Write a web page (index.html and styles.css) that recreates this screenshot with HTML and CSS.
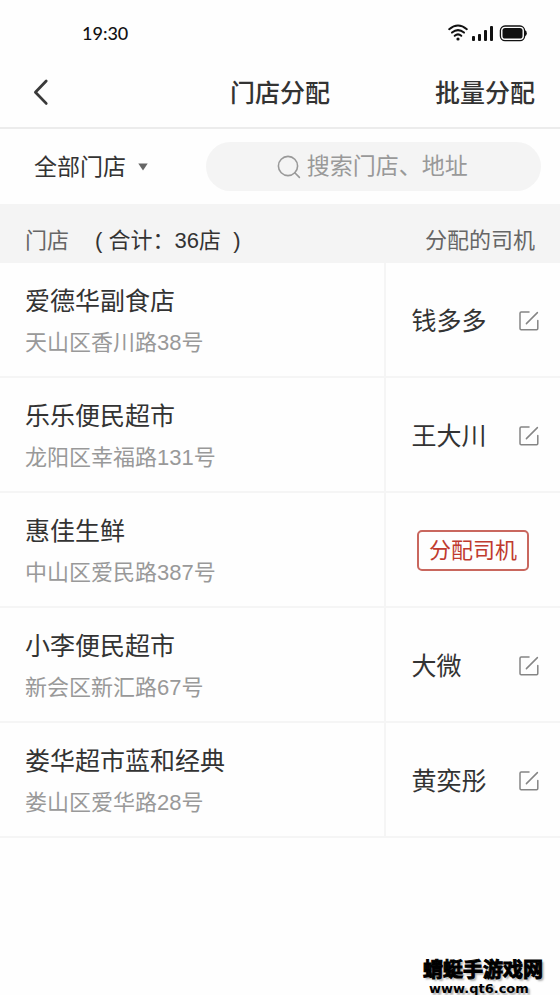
FILE: index.html
```html
<!DOCTYPE html>
<html lang="zh-CN">
<head>
<meta charset="utf-8">
<meta name="viewport" content="width=device-width, initial-scale=1">
<title>门店分配</title>
<link rel="stylesheet" href="styles.css">
</head>
<body>
<svg class="defs" width="0" height="0" aria-hidden="true">
  <symbol id="edit" viewBox="0 0 22 22">
    <path d="M11 2H3.2Q2 2 2 3.2V18.6Q2 19.8 3.2 19.8H18.6Q19.8 19.8 19.8 18.6V10.6M8.4 13.6L19.4 2.6" fill="none" stroke="#858585" stroke-width="1.5" stroke-linecap="round"/>
  </symbol>
</svg>
<div class="status">
  <span class="time">19:30</span>
  <svg width="80" height="20" viewBox="0 0 80 20" aria-hidden="true">
    <g fill="none" stroke="#111" stroke-width="2" stroke-linecap="round">
      <path d="M2.2 6.2Q11 -1.2 19.8 6.2"/>
      <path d="M5 9.6Q11 4.6 17 9.6"/>
      <path d="M7.7 12.8Q11 10 14.3 12.8"/>
    </g>
    <circle cx="11" cy="16" r="1.6" fill="#111"/>
    <g fill="#111">
      <rect x="25" y="13" width="3" height="5" rx="1"/>
      <rect x="31" y="11" width="3" height="7" rx="1"/>
      <rect x="37" y="7" width="3" height="11" rx="1"/>
      <rect x="43" y="3" width="3" height="15" rx="1"/>
      <rect x="55.5" y="5" width="20" height="10.5" rx="2.6"/>
      <path d="M78 7.2Q79.8 7.6 79.8 10.2T78 13.2Z"/>
    </g>
    <rect x="53.4" y="3" width="24.2" height="14.6" rx="4.6" fill="none" stroke="#111" stroke-width="1.3"/>
  </svg>
</div>
<header class="nav">
  <button class="back" type="button" aria-label="返回">
    <svg width="16" height="28" viewBox="0 0 16 28" aria-hidden="true"><path d="M13.2 2L2.4 13.2L13.2 24.4" fill="none" stroke="#3a3a3a" stroke-width="2.8" stroke-linecap="round" stroke-linejoin="round"/></svg>
  </button>
  <h1>门店分配</h1>
  <button class="batch" type="button">批量分配</button>
</header>
<main>
  <div class="filter">
    <button class="scope" type="button">全部门店
      <svg width="10" height="8" viewBox="0 0 10 8" aria-hidden="true"><path d="M0.3 0.5H9.7L5 7.6Z" fill="#666"/></svg>
    </button>
    <label class="search">
      <svg width="24" height="24" viewBox="0 0 24 24" aria-hidden="true"><g fill="none" stroke="#999" stroke-width="1.6" stroke-linecap="round"><circle cx="11" cy="11" r="9.6"/><path d="M17.8 17.8L22.4 22.4"/></g></svg>
      <input type="text" placeholder="搜索门店、地址" aria-label="搜索门店、地址">
    </label>
  </div>
  <table>
    <thead>
      <tr>
        <th class="store" scope="col">门店<span class="total">( 合计：36店 &nbsp;)</span></th>
        <th class="driver" scope="col">分配的司机</th>
      </tr>
    </thead>
    <tbody>
      <tr>
        <td><h2>爱德华副食店</h2><p>天山区香川路38号</p></td>
        <td><div class="who">钱多多<button type="button" aria-label="编辑"><svg width="22" height="22"><use href="#edit"/></svg></button></div></td>
      </tr>
      <tr>
        <td><h2>乐乐便民超市</h2><p>龙阳区幸福路131号</p></td>
        <td><div class="who">王大川<button type="button" aria-label="编辑"><svg width="22" height="22"><use href="#edit"/></svg></button></div></td>
      </tr>
      <tr>
        <td><h2>惠佳生鲜</h2><p>中山区爱民路387号</p></td>
        <td class="empty"><button class="assign" type="button">分配司机</button></td>
      </tr>
      <tr>
        <td><h2>小李便民超市</h2><p>新会区新汇路67号</p></td>
        <td><div class="who">大微<button type="button" aria-label="编辑"><svg width="22" height="22"><use href="#edit"/></svg></button></div></td>
      </tr>
      <tr>
        <td><h2>娄华超市蓝和经典</h2><p>娄山区爱华路28号</p></td>
        <td><div class="who">黄奕彤<button type="button" aria-label="编辑"><svg width="22" height="22"><use href="#edit"/></svg></button></div></td>
      </tr>
    </tbody>
  </table>
</main>
<footer class="mark">
  <span class="site">蜻蜓手游戏网</span>
  <span class="url">www.qt6.com</span>
</footer>
</body>
</html>
```
FILE: styles.css
```css
* { box-sizing: border-box; }

body {
  margin: 0;
  min-height: 100vh;
  display: flex;
  flex-direction: column;
  background: #fefefe;
  color: #333;
  font-family: "Liberation Sans", "Noto Sans CJK SC", sans-serif;
  font-size: 25px;
}

button {
  padding: 0;
  border: 0;
  background: none;
  color: inherit;
  font: inherit;
}

svg { display: block; }
.defs { position: absolute; }
h1, h2, p { margin: 0; font-weight: 400; }

.status {
  height: 56px;
  padding: 10px 33px 0 82px;
  display: flex;
  align-items: center;
  justify-content: space-between;
}

.time {
  color: #111;
  font-family: Lato, sans-serif;
  font-size: 18px;
  font-weight: 500;
}

.nav {
  height: 73px;
  padding: 2px 25px 0;
  display: grid;
  grid-template-columns: 1fr auto 1fr;
  align-items: center;
  border-bottom: 2px solid #ececec;
}

.nav h1, .batch { font-size: 25px; font-weight: 500; line-height: 36px; }
.back { justify-self: start; padding-left: 8px; }
.batch { justify-self: end; }

.filter {
  height: 75px;
  padding: 0 19px 0 34px;
  display: flex;
  align-items: center;
  justify-content: space-between;
}

.scope {
  display: flex;
  align-items: center;
  gap: 12px;
  font-size: 23px;
  line-height: 32px;
}

.search {
  width: 66%;
  height: 49px;
  display: flex;
  align-items: center;
  justify-content: center;
  gap: 6px;
  border-radius: 25px;
  background: #f4f4f4;
}

.search input {
  width: 164px;
  padding: 0;
  border: 0;
  outline: 0;
  background: none;
  color: #333;
  font: inherit;
  font-size: 23px;
}

.search input::placeholder { color: #999; opacity: 1; }

table {
  width: 100%;
  table-layout: fixed;
  border-collapse: separate;
  border-spacing: 0;
}

th {
  height: 59px;
  padding: 8px 25px 0;
  background: #f4f4f4;
  color: #666;
  font-size: 22px;
  font-weight: 400;
  text-align: left;
}

.store { width: 69%; }
.driver { padding-left: 0; text-align: right; white-space: nowrap; }
.total { margin-left: 26px; color: #333; }

td {
  height: 115px;
  padding: 2px 20px 0 25px;
  border-bottom: 2px solid #f5f5f5;
  vertical-align: middle;
}

td:first-child { padding-top: 4px; border-right: 2px solid #f5f5f5; }
td h2 { font-size: 25px; line-height: 42px; }
td p { color: #999; font-size: 22px; line-height: 42px; }

.who {
  display: flex;
  align-items: center;
  justify-content: space-between;
  line-height: 36px;
}

.empty { padding-right: 31px; text-align: right; }

.assign {
  width: 112px;
  height: 41px;
  border: 2px solid #c9675e;
  border-radius: 5px;
  color: #c03a2e;
  font-size: 22px;
  line-height: 37px;
  vertical-align: middle;
}

.mark {
  margin-top: auto;
  padding-right: 17px;
  align-self: flex-end;
  display: flex;
  flex-direction: column;
  gap: 2px;
  color: #000;
  font-weight: 700;
  text-shadow: 2px 2px 2px #aaa;
}

.site {
  font-size: 20px;
  line-height: 20px;
  -webkit-text-stroke: 1px #000;
}

.url {
  padding-left: 6px;
  font-family: "DejaVu Sans", sans-serif;
  font-size: 13px;
  line-height: 13px;
}
```
